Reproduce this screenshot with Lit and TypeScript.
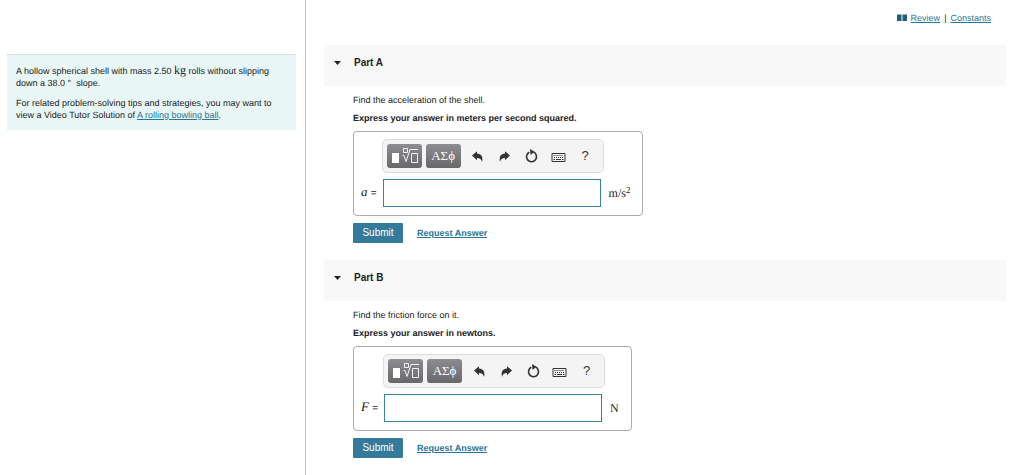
import { LitElement, html, css, svg } from "lit";
import { customElement, property, state } from "lit/decorators.js";

const undoIcon = svg`<path d="M0 4.400 5 .2v2.400c4 .2 6.400 3 5 8.400-.6-2.700-2-4-5-4v2.300z" fill="#333"/>`;
const redoIcon = svg`<path d="M11 4.400 6 .2v2.400C2 2.800-.2 5.600 1 11c.6-2.700 2-4 5-4v2.300z" fill="#333"/>`;

@customElement("answer-box")
class AnswerBox extends LitElement {
  @property() name = "";
  @property() unit = "";
  @property() power = "";

  static styles = css`
    :host { display: block; }
    .box {
      display: inline-grid;
      grid-template-columns: auto 218px auto;
      column-gap: 6px;
      row-gap: 6px;
      align-items: center;
      box-sizing: border-box;
      padding: 7px 12px 8px 7px;
      border: 1px solid #aaa;
      border-radius: 4px;
      vertical-align: top;
    }
    .tools {
      grid-column: 2;
      box-sizing: border-box;
      width: 222px;
      height: 34px;
      margin: 0 -3px 0 -1px;
      padding: 0 4px;
      display: flex;
      align-items: center;
      background: #f4f4f4;
      border: 1px solid #ddd;
      border-radius: 5px;
    }
    button {
      font: inherit;
      color: #333;
      border: 0;
      padding: 0;
      background: none;
      display: flex;
      align-items: center;
      justify-content: center;
      cursor: pointer;
    }
    .dark {
      flex: none;
      width: 35px;
      height: 24px;
      margin-right: 4px;
      color: #fff;
      background: linear-gradient(#8d8d91, #68686b);
      border-radius: 3px;
      font: 13px/24px "Liberation Serif", serif;
    }
    .tool { flex: 1; height: 24px; }
    .last { font: 13px/24px "Liberation Sans", Arial, sans-serif; }
    label {
      grid-column: 1;
      font: 13px/14px "Liberation Serif", serif;
      color: #222;
      white-space: nowrap;
    }
    .eq { font: 10px/14px "Liberation Sans", Arial, sans-serif; }
    input {
      box-sizing: border-box;
      width: 218px;
      height: 28px;
      margin: 0;
      padding: 2px 6px;
      border: 1px solid #3c83a2;
      border-radius: 0;
      background: #fff;
      font: 12px "Liberation Sans", Arial, sans-serif;
      outline: none;
    }
    .unit {
      padding-left: 2px;
      font: 12px/14px "Liberation Serif", serif;
      color: #222;
    }
    sup { font-size: 9px; line-height: 0; vertical-align: 4px; }
  `;

  render() {
    return html`<div class="box">
      <div class="tools" role="toolbar" aria-label="Equation tools">
        <button class="dark" aria-label="Templates">
          <svg width="29" height="18" viewBox="0 0 29 18" fill="none" stroke="#fff">
            <path d="M2 6h7v10H2z" fill="#fff" stroke="none" />
            <path d="M13.500 1.500h4v4h-4zM12.500 8.500h1.500l2 6 4-12H28" stroke-width=".9" />
            <path d="M21.500 6.500h6v9h-6z" stroke-width=".9" />
          </svg>
        </button>
        <button class="dark" aria-label="Symbols">ΑΣϕ</button>
        <button class="tool" aria-label="Undo"><svg width="11" height="11">${undoIcon}</svg></button>
        <button class="tool" aria-label="Redo"><svg width="11" height="11">${redoIcon}</svg></button>
        <button class="tool" aria-label="Reset">
          <svg width="13" height="14" viewBox="0 0 13 14">
            <path d="M8.500 3.100a5 5 0 1 1-4.200.1" fill="none" stroke="#333" stroke-width="1.600" />
            <path d="M5 0l4.500 2.800L5.500 6z" fill="#333" />
          </svg>
        </button>
        <button class="tool" aria-label="Keyboard">
          <svg width="15" height="13" viewBox="0 0 15 13" fill="none" stroke="#333">
            <path d="M1 3.500h13v8H1z" />
            <path d="M2.500 5.500h10M3 7.500h10" stroke-dasharray="1 1" />
            <path d="M2.500 9.500h1.500m1 0h5m1 0h1.500" />
          </svg>
        </button>
        <button class="tool last" aria-label="Help">?</button>
      </div>
      <label for="answer"><i>${this.name}</i> <span class="eq">=</span></label>
      <input id="answer" type="text" autocomplete="off" />
      <span class="unit">${this.unit}${this.power ? html`<sup>${this.power}</sup>` : ""}</span>
    </div>`;
  }
}

@customElement("question-part")
class QuestionPart extends LitElement {
  @property() heading = "";
  @property() prompt = "";
  @property() instruction = "";
  @property() name = "";
  @property() unit = "";
  @property() power = "";
  @state() private open = true;

  static styles = css`
    :host { display: block; color: #222; }
    h2 { margin: 0; }
    .head {
      width: 100%;
      height: 41px;
      padding: 0 10px 6px;
      border: 0;
      background: #f8f8f8;
      display: flex;
      align-items: center;
      gap: 13px;
      font: bold 10px/14px "Liberation Sans", Arial, sans-serif;
      color: #222;
      text-align: left;
      cursor: pointer;
    }
    .body { padding: 8px 0 17px 29px; }
    p { margin: 0 0 6px; line-height: 12px; }
    .strong { font-weight: bold; margin-bottom: 7px; }
    .actions { display: flex; align-items: center; gap: 14px; margin-top: 7px; }
    .submit {
      width: 50px;
      height: 20px;
      padding: 0;
      border: 0;
      border-radius: 1px;
      background: #347b9b;
      color: #fff;
      font: 10px/20px "Liberation Sans", Arial, sans-serif;
      cursor: pointer;
    }
    a { color: #2b7594; font-weight: bold; }
  `;

  render() {
    return html`<section>
      <h2>
        <button class="head" aria-expanded=${this.open} @click=${() => (this.open = !this.open)}>
          <svg width="7" height="4"><path d="M0 0h7L3.500 4z" fill="#222" /></svg>${this.heading}
        </button>
      </h2>
      ${this.open
        ? html`<div class="body">
            <p>${this.prompt}</p>
            <p class="strong">${this.instruction}</p>
            <answer-box .name=${this.name} .unit=${this.unit} .power=${this.power}></answer-box>
            <div class="actions">
              <button class="submit">Submit</button><a href="#">Request Answer</a>
            </div>
          </div>`
        : ""}
    </section>`;
  }
}

@customElement("app-root")
class AppRoot extends LitElement {
  static styles = css`
    :host {
      display: grid;
      grid-template-columns: 306px 1fr;
      min-height: 100vh;
      background: #fff;
      color: #222;
      font: 9px/12px "Liberation Sans", Arial, sans-serif;
      text-rendering: geometricPrecision;
    }
    aside { padding: 54px 9px 0 7px; border-right: 1px solid #bfc3cf; }
    .intro {
      padding: 10px 9px 9px;
      background: #e8f6f6;
      border-top: 1px solid #d8dede;
    }
    p { margin: 0; }
    p + p { margin-top: 8px; }
    .kg { font: 12px/10px "Liberation Serif", serif; }
    a { color: #2b7594; }
    main { padding: 12px 18px 0; min-width: 0; }
    nav {
      display: flex;
      justify-content: flex-end;
      align-items: center;
      gap: 4px;
      padding-right: 15px;
      margin-bottom: 21px;
    }
    .review { display: flex; align-items: center; gap: 4px; }
  `;

  render() {
    return html`
      <aside>
        <div class="intro">
          <p>A hollow spherical shell with mass 2.50 <span class="kg">kg</span> rolls without slipping down a 38.0 °&nbsp; slope.</p>
          <p>For related problem-solving tips and strategies, you may want to view a Video Tutor Solution of <a href="#">A rolling bowling ball</a>.</p>
        </div>
      </aside>
      <main>
        <nav>
          <span class="review">
            <svg width="10" height="8"><path d="M0 .5h4.500V7H0zM5.500.5H10V7H5.500z" fill="#1f6079" /></svg>
            <a href="#">Review</a>
          </span>
          <span>|</span>
          <a href="#">Constants</a>
        </nav>
        <question-part
          heading="Part A"
          prompt="Find the acceleration of the shell."
          instruction="Express your answer in meters per second squared."
          name="a"
          unit="m/s"
          power="2"
        ></question-part>
        <question-part
          heading="Part B"
          prompt="Find the friction force on it."
          instruction="Express your answer in newtons."
          name="F"
          unit="N"
        ></question-part>
      </main>
    `;
  }
}
